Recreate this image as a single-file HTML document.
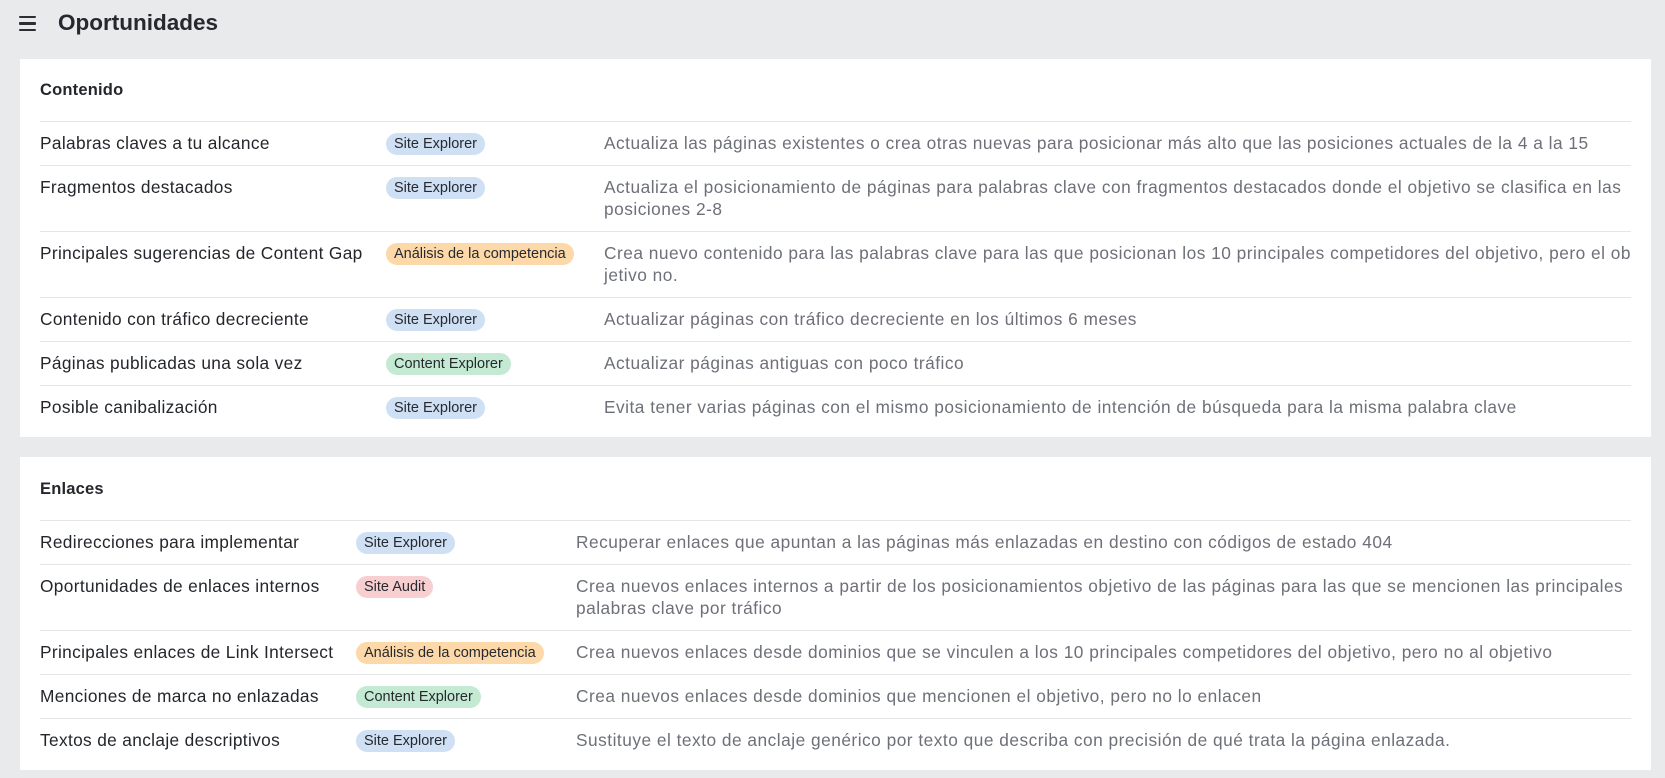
<!DOCTYPE html>
<html><head><meta charset="utf-8"><style>
*{box-sizing:border-box;margin:0;padding:0}
body{width:1665px;height:778px;background:#e9eaec;font-family:"Liberation Sans",sans-serif;color:#23262b;overflow:hidden;position:relative}
.top{position:absolute;left:0;top:0;height:46px;width:100%}
.ham{position:absolute;left:19px;top:16px;width:17px}
.ham i{display:block;height:2.2px;background:#2b2e33;margin-bottom:4.3px;border-radius:1px}
.title{position:absolute;left:58px;top:9px;font-size:22.5px;font-weight:bold;line-height:28px;color:#25282d}
.card{position:absolute;left:20px;width:1631px;background:#fff}
.h{position:absolute;left:20px;font-size:16.5px;font-weight:bold;line-height:22px;letter-spacing:0.2px}
.rows{position:absolute;left:20px;right:20px}
.row{border-top:1px solid #e4e5e8;position:relative;padding:10px 0 11px;line-height:22px;font-size:17.3px;white-space:nowrap}
.c1{position:absolute;left:0;top:10px;letter-spacing:0.35px}
.c2{position:absolute;top:11px;height:22px;line-height:23px;font-size:14.5px;padding:0 8px;border-radius:12px;color:#26292e}
.c3{color:#6d7078;margin-left:var(--d);letter-spacing:0.5px}
.b{background:#cfe0f5}.o{background:#fdd8a8}.g{background:#c4ead3}.r{background:#f8cfd0}
</style></head><body>
<div class="top"><div class="ham"><i></i><i></i><i></i></div><div class="title">Oportunidades</div></div>

<div class="card" style="top:59px;height:378px">
<div class="h" style="top:20px">Contenido</div>
<div class="rows" style="top:62px;--d:564px">
<div class="row"><span class="c1">Palabras claves a tu alcance</span><span class="c2 b" style="left:346px">Site Explorer</span><div class="c3">Actualiza las páginas existentes o crea otras nuevas para posicionar más alto que las posiciones actuales de la 4 a la 15</div></div>
<div class="row"><span class="c1">Fragmentos destacados</span><span class="c2 b" style="left:346px">Site Explorer</span><div class="c3">Actualiza el posicionamiento de páginas para palabras clave con fragmentos destacados donde el objetivo se clasifica en las<br>posiciones 2-8</div></div>
<div class="row"><span class="c1">Principales sugerencias de Content Gap</span><span class="c2 o" style="left:346px">Análisis de la competencia</span><div class="c3">Crea nuevo contenido para las palabras clave para las que posicionan los 10 principales competidores del objetivo, pero el ob<br>jetivo no.</div></div>
<div class="row"><span class="c1">Contenido con tráfico decreciente</span><span class="c2 b" style="left:346px">Site Explorer</span><div class="c3">Actualizar páginas con tráfico decreciente en los últimos 6 meses</div></div>
<div class="row"><span class="c1">Páginas publicadas una sola vez</span><span class="c2 g" style="left:346px">Content Explorer</span><div class="c3">Actualizar páginas antiguas con poco tráfico</div></div>
<div class="row"><span class="c1">Posible canibalización</span><span class="c2 b" style="left:346px">Site Explorer</span><div class="c3">Evita tener varias páginas con el mismo posicionamiento de intención de búsqueda para la misma palabra clave</div></div>
</div></div>

<div class="card" style="top:457px;height:313px">
<div class="h" style="top:21px">Enlaces</div>
<div class="rows" style="top:63px;--d:536px">
<div class="row"><span class="c1">Redirecciones para implementar</span><span class="c2 b" style="left:316px">Site Explorer</span><div class="c3">Recuperar enlaces que apuntan a las páginas más enlazadas en destino con códigos de estado 404</div></div>
<div class="row"><span class="c1">Oportunidades de enlaces internos</span><span class="c2 r" style="left:316px">Site Audit</span><div class="c3">Crea nuevos enlaces internos a partir de los posicionamientos objetivo de las páginas para las que se mencionen las principales<br>palabras clave por tráfico</div></div>
<div class="row"><span class="c1">Principales enlaces de Link Intersect</span><span class="c2 o" style="left:316px">Análisis de la competencia</span><div class="c3">Crea nuevos enlaces desde dominios que se vinculen a los 10 principales competidores del objetivo, pero no al objetivo</div></div>
<div class="row"><span class="c1">Menciones de marca no enlazadas</span><span class="c2 g" style="left:316px">Content Explorer</span><div class="c3">Crea nuevos enlaces desde dominios que mencionen el objetivo, pero no lo enlacen</div></div>
<div class="row"><span class="c1">Textos de anclaje descriptivos</span><span class="c2 b" style="left:316px">Site Explorer</span><div class="c3">Sustituye el texto de anclaje genérico por texto que describa con precisión de qué trata la página enlazada.</div></div>
</div></div>
</body></html>
